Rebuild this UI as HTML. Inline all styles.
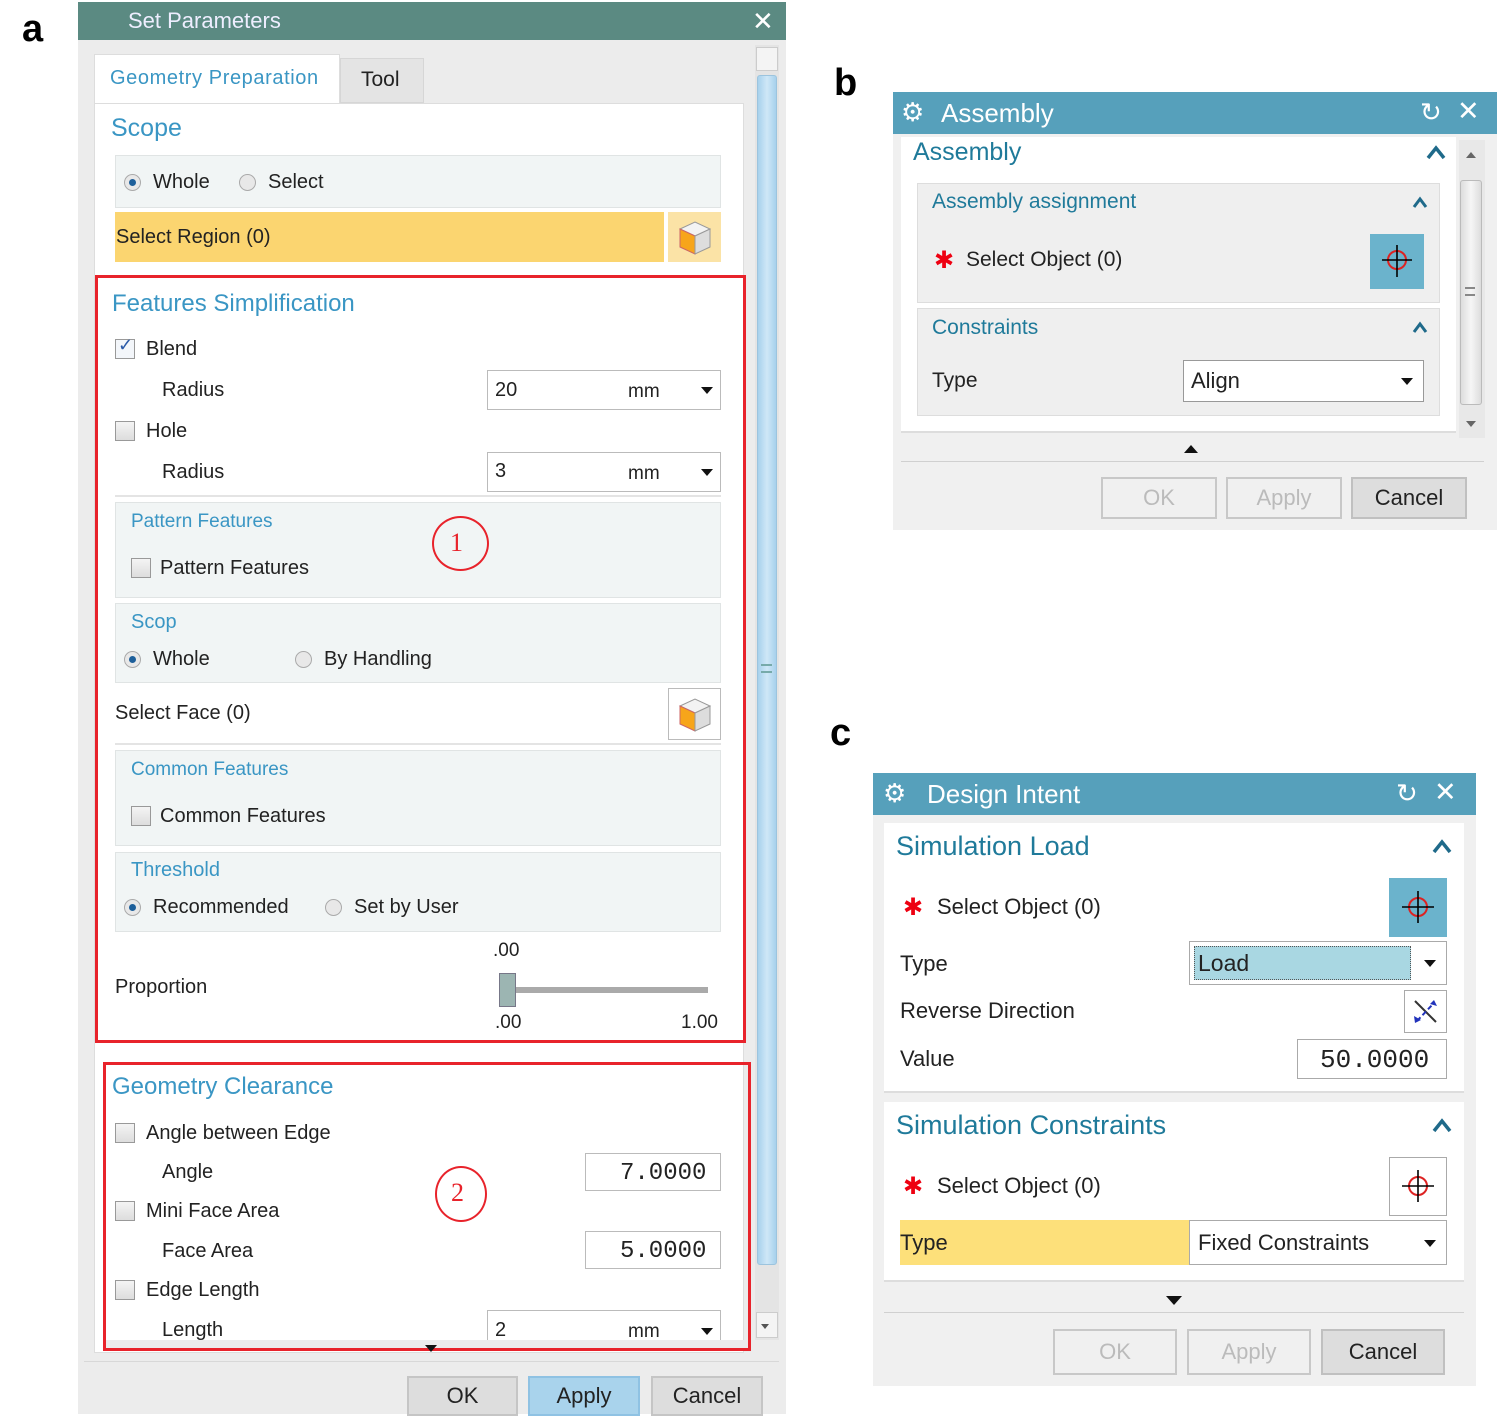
<!DOCTYPE html>
<html><head><meta charset="utf-8"><style>
*{margin:0;padding:0;box-sizing:border-box}
body{width:1500px;height:1416px;background:#fff;position:relative;overflow:hidden;font-family:"Liberation Sans",sans-serif;color:#222}
.a{position:absolute}
.t{position:absolute;line-height:1;white-space:nowrap}
.blue{color:#3a96c4}
.teal{color:#1f7a9a}
.rb{position:absolute;width:17px;height:17px;border-radius:50%;border:1px solid #aaa;background:#e8e8e8}
.rb.on::after{content:"";position:absolute;left:4px;top:4px;width:7px;height:7px;border-radius:50%;background:#1d5f9a}
.cb{position:absolute;width:20px;height:20px;border:1px solid #999;background:linear-gradient(#f4f4f4,#ddd)}
.box{position:absolute;background:#fff;border:1px solid #bbb}
.grp{position:absolute;background:#f1f5f5;border:1px solid #e0e4e4}
.btn{position:absolute;border:2px solid #c8c8c8;background:#eee;text-align:center;font-size:22px}
.dd{position:absolute;width:0;height:0;border-left:6px solid transparent;border-right:6px solid transparent;border-top:7px solid #111}
</style></head><body>

<!-- labels -->
<div class="t" style="left:22px;top:10px;font-size:38px;font-weight:bold;color:#000">a</div>
<div class="t" style="left:834px;top:64px;font-size:38px;font-weight:bold;color:#000">b</div>
<div class="t" style="left:830px;top:714px;font-size:38px;font-weight:bold;color:#000">c</div>

<!-- PANEL A -->
<div class="a" style="left:78px;top:2px;width:708px;height:1412px;background:#ececec"></div>
<div class="a" style="left:78px;top:2px;width:708px;height:38px;background:#5b8a82"></div>
<div class="t" style="left:128px;top:10px;font-size:22px;color:#eef">Set Parameters</div>
<div class="t" style="left:752px;top:8px;font-size:26px;color:#fff">✕</div>
<!-- tabs -->
<div class="a" style="left:94px;top:54px;width:246px;height:52px;background:#fff;border:1px solid #ddd;border-bottom:none"></div>
<div class="a" style="left:340px;top:58px;width:84px;height:45px;background:#e4e4e4;border:1px solid #d6d6d6"></div>
<div class="t blue" style="left:110px;top:68px;font-size:20px;letter-spacing:0.6px">Geometry Preparation</div>
<div class="t" style="left:361px;top:69px;font-size:21px">Tool</div>
<div class="a" style="left:94px;top:103px;width:650px;height:1250px;background:#fff;border:1px solid #ddd"></div>
<!-- scrollbar -->
<div class="a" style="left:755px;top:45px;width:24px;height:1295px;background:#e4e4e4"></div>
<div class="a" style="left:756px;top:47px;width:22px;height:24px;background:#f4f4f4;border:1px solid #ccc"></div>
<div class="a" style="left:757px;top:75px;width:20px;height:1190px;background:linear-gradient(90deg,#a7d1ec,#cfe7f7,#a7d1ec);border:1px solid #9cc4de;border-radius:3px"></div>
<div class="a" style="left:761px;top:664px;width:11px;height:9px;border-top:2px solid #7aa;border-bottom:2px solid #7aa"></div>
<div class="a" style="left:756px;top:1312px;width:22px;height:26px;background:#f4f4f4;border:1px solid #ccc"></div>
<div class="dd" style="left:761px;top:1324px;border-left-width:4px;border-right-width:4px;border-top-width:5px;border-top-color:#555"></div>

<div class="t blue" style="left:111px;top:116px;font-size:25px">Scope</div>
<div class="grp" style="left:115px;top:155px;width:606px;height:53px"></div>
<div class="rb on" style="left:124px;top:174px"></div>
<div class="t" style="left:153px;top:172px;font-size:20px">Whole</div>
<div class="rb" style="left:239px;top:174px"></div>
<div class="t" style="left:268px;top:172px;font-size:20px">Select</div>
<div class="a" style="left:115px;top:212px;width:549px;height:50px;background:#fbd570"></div>
<div class="t" style="left:116px;top:227px;font-size:20px">Select Region (0)</div>
<div class="a" style="left:668px;top:212px;width:53px;height:50px;background:#fbe3a6"></div>
<svg class="a" style="left:677px;top:219px" width="36" height="38" viewBox="0 0 36 38"><path d="M3 10 L18 3 L33 10 L18 17Z" fill="#f3f3f3" stroke="#999"/><path d="M3 10 L18 17 L18 35 L3 28Z" fill="#f7a51a" stroke="#c66"/><path d="M18 17 L33 10 L33 28 L18 35Z" fill="#ddd" stroke="#999"/></svg>

<!-- red box 1 -->
<div class="a" style="left:95px;top:275px;width:651px;height:768px;border:3px solid #e8232b"></div>
<div class="t blue" style="left:112px;top:292px;font-size:24px">Features Simplification</div>
<div class="cb" style="left:115px;top:339px;background:#f3f6fa"></div>
<div class="t" style="left:118px;top:336px;font-size:18px;color:#2a5aa8">✓</div>
<div class="t" style="left:146px;top:339px;font-size:20px">Blend</div>
<div class="t" style="left:162px;top:380px;font-size:20px">Radius</div>
<div class="box" style="left:487px;top:370px;width:234px;height:40px"></div>
<div class="t" style="left:495px;top:380px;font-size:20px">20</div>
<div class="t" style="left:628px;top:382px;font-size:19px">mm</div>
<div class="dd" style="left:701px;top:387px"></div>
<div class="cb" style="left:115px;top:421px"></div>
<div class="t" style="left:146px;top:421px;font-size:20px">Hole</div>
<div class="t" style="left:162px;top:462px;font-size:20px">Radius</div>
<div class="box" style="left:487px;top:452px;width:234px;height:40px"></div>
<div class="t" style="left:495px;top:461px;font-size:20px">3</div>
<div class="t" style="left:628px;top:464px;font-size:19px">mm</div>
<div class="dd" style="left:701px;top:469px"></div>
<div class="a" style="left:115px;top:495px;width:606px;height:2px;background:#e4e4e4"></div>
<div class="grp" style="left:115px;top:502px;width:606px;height:96px"></div>
<div class="t blue" style="left:131px;top:512px;font-size:19px">Pattern Features</div>
<div class="cb" style="left:131px;top:558px"></div>
<div class="t" style="left:160px;top:558px;font-size:20px">Pattern Features</div>
<div class="a" style="left:432px;top:516px;width:57px;height:55px;border:2px solid #e8232b;border-radius:50%"></div>
<div class="t" style="left:450px;top:530px;font-size:26px;color:#e8232b;font-family:'Liberation Serif',serif">1</div>
<div class="grp" style="left:115px;top:603px;width:606px;height:80px"></div>
<div class="t blue" style="left:131px;top:612px;font-size:20px">Scop</div>
<div class="rb on" style="left:124px;top:651px"></div>
<div class="t" style="left:153px;top:649px;font-size:20px">Whole</div>
<div class="rb" style="left:295px;top:651px"></div>
<div class="t" style="left:324px;top:649px;font-size:20px">By Handling</div>
<div class="t" style="left:115px;top:703px;font-size:20px">Select Face (0)</div>
<div class="box" style="left:668px;top:688px;width:53px;height:52px"></div>
<svg class="a" style="left:677px;top:696px" width="36" height="38" viewBox="0 0 36 38"><path d="M3 10 L18 3 L33 10 L18 17Z" fill="#f3f3f3" stroke="#999"/><path d="M3 10 L18 17 L18 35 L3 28Z" fill="#f7a51a" stroke="#c66"/><path d="M18 17 L33 10 L33 28 L18 35Z" fill="#ddd" stroke="#999"/></svg>
<div class="a" style="left:115px;top:743px;width:606px;height:2px;background:#e4e4e4"></div>
<div class="grp" style="left:115px;top:750px;width:606px;height:96px"></div>
<div class="t blue" style="left:131px;top:760px;font-size:19px">Common Features</div>
<div class="cb" style="left:131px;top:806px"></div>
<div class="t" style="left:160px;top:806px;font-size:20px">Common Features</div>
<div class="grp" style="left:115px;top:852px;width:606px;height:80px"></div>
<div class="t blue" style="left:131px;top:860px;font-size:20px">Threshold</div>
<div class="rb on" style="left:124px;top:899px"></div>
<div class="t" style="left:153px;top:897px;font-size:20px">Recommended</div>
<div class="rb" style="left:325px;top:899px"></div>
<div class="t" style="left:354px;top:897px;font-size:20px">Set by User</div>
<div class="t" style="left:493px;top:941px;font-size:19px">.00</div>
<div class="t" style="left:115px;top:977px;font-size:20px">Proportion</div>
<div class="a" style="left:510px;top:987px;width:198px;height:6px;background:#aaa"></div>
<div class="a" style="left:499px;top:973px;width:17px;height:34px;background:#9cb5b2;border:1px solid #778"></div>
<div class="t" style="left:495px;top:1013px;font-size:19px">.00</div>
<div class="t" style="left:681px;top:1013px;font-size:19px">1.00</div>

<!-- red box 2 -->
<div class="a" style="left:103px;top:1062px;width:648px;height:289px;border:3px solid #e8232b"></div>
<div class="t blue" style="left:112px;top:1075px;font-size:24px">Geometry Clearance</div>
<div class="cb" style="left:115px;top:1123px"></div>
<div class="t" style="left:146px;top:1123px;font-size:20px">Angle between Edge</div>
<div class="t" style="left:162px;top:1162px;font-size:20px">Angle</div>
<div class="box" style="left:585px;top:1153px;width:136px;height:38px"></div>
<div class="t" style="left:620px;top:1162px;font-size:24px;font-family:'Liberation Mono',monospace">7.0000</div>
<div class="cb" style="left:115px;top:1201px"></div>
<div class="t" style="left:146px;top:1201px;font-size:20px">Mini Face Area</div>
<div class="a" style="left:435px;top:1166px;width:52px;height:56px;border:2px solid #e8232b;border-radius:50%"></div>
<div class="t" style="left:451px;top:1180px;font-size:26px;color:#e8232b;font-family:'Liberation Serif',serif">2</div>
<div class="t" style="left:162px;top:1241px;font-size:20px">Face Area</div>
<div class="box" style="left:585px;top:1231px;width:136px;height:38px"></div>
<div class="t" style="left:620px;top:1240px;font-size:24px;font-family:'Liberation Mono',monospace">5.0000</div>
<div class="cb" style="left:115px;top:1280px"></div>
<div class="t" style="left:146px;top:1280px;font-size:20px">Edge Length</div>
<div class="t" style="left:162px;top:1320px;font-size:20px">Length</div>
<div class="box" style="left:487px;top:1310px;width:234px;height:30px;border-bottom:none"></div>
<div class="t" style="left:495px;top:1320px;font-size:20px">2</div>
<div class="t" style="left:628px;top:1322px;font-size:19px">mm</div>
<div class="dd" style="left:701px;top:1328px"></div>
<div class="a" style="left:106px;top:1340px;width:640px;height:8px;background:#ececec"></div>
<div class="dd" style="left:425px;top:1345px"></div>
<div class="a" style="left:84px;top:1361px;width:695px;height:1px;background:#d8d8d8"></div>
<div class="btn" style="left:407px;top:1376px;width:111px;height:40px;background:#ddd;border-color:#c5c5c5;line-height:36px">OK</div>
<div class="btn" style="left:528px;top:1376px;width:112px;height:40px;background:#a9d3ec;border-color:#8fc2e3;line-height:36px">Apply</div>
<div class="btn" style="left:651px;top:1376px;width:112px;height:40px;background:#ddd;border-color:#c5c5c5;line-height:36px">Cancel</div>

<!-- PANEL B -->
<div class="a" style="left:893px;top:92px;width:604px;height:438px;background:#f0f0f0"></div>
<div class="a" style="left:893px;top:92px;width:604px;height:42px;background:#56a0bb"></div>
<div class="t" style="left:901px;top:99px;font-size:26px;color:#fff">⚙</div>
<div class="t" style="left:941px;top:100px;font-size:26px;color:#fff">Assembly</div>
<div class="t" style="left:1420px;top:99px;font-size:26px;color:#fff">↻</div>
<div class="t" style="left:1457px;top:98px;font-size:27px;color:#fff">✕</div>
<div class="a" style="left:901px;top:137px;width:555px;height:296px;background:#fff;border-bottom:2px solid #ddd"></div>
<div class="t teal" style="left:913px;top:140px;font-size:25px">Assembly</div>
<svg class="a" style="left:1426px;top:144px" width="20" height="16" viewBox="0 0 20 16"><path d="M2 14L10 4L18 14" fill="none" stroke="#1f6a8a" stroke-width="3.5"/></svg>
<div class="a" style="left:917px;top:183px;width:523px;height:120px;background:#efefef;border:1px solid #ddd"></div>
<div class="t teal" style="left:932px;top:191px;font-size:21px">Assembly assignment</div>
<svg class="a" style="left:1412px;top:196px" width="16" height="13" viewBox="0 0 16 13"><path d="M2 11L8 3L14 11" fill="none" stroke="#1f6a8a" stroke-width="3"/></svg>
<div class="t" style="left:934px;top:249px;font-size:24px;color:#e01">✱</div>
<div class="t" style="left:966px;top:249px;font-size:21px">Select Object (0)</div>
<div class="a" style="left:1370px;top:234px;width:54px;height:55px;background:#6bb3cc"></div>
<svg class="a" style="left:1380px;top:243px" width="34" height="36" viewBox="0 0 34 36"><circle cx="17" cy="17" r="9" fill="none" stroke="#d22" stroke-width="2"/><path d="M17 2V34M2 17H32" stroke="#000" stroke-width="1.6"/></svg>
<div class="a" style="left:917px;top:308px;width:523px;height:108px;background:#efefef;border:1px solid #ddd"></div>
<div class="t teal" style="left:932px;top:317px;font-size:21px">Constraints</div>
<svg class="a" style="left:1412px;top:321px" width="16" height="13" viewBox="0 0 16 13"><path d="M2 11L8 3L14 11" fill="none" stroke="#1f6a8a" stroke-width="3"/></svg>
<div class="t" style="left:932px;top:370px;font-size:21px">Type</div>
<div class="box" style="left:1183px;top:360px;width:241px;height:42px;border-color:#999"></div>
<div class="t" style="left:1191px;top:370px;font-size:22px">Align</div>
<div class="dd" style="left:1401px;top:378px"></div>
<div class="a" style="left:1459px;top:140px;width:26px;height:298px;background:#e8e8e8"></div>
<div class="dd" style="left:1466px;top:152px;border-top:none;border-bottom:6px solid #666;border-left-width:5px;border-right-width:5px"></div>
<div class="a" style="left:1460px;top:180px;width:22px;height:225px;background:linear-gradient(90deg,#ddd,#f6f6f6,#ddd);border:1px solid #bbb;border-radius:3px"></div>
<div class="a" style="left:1465px;top:287px;width:10px;height:9px;border-top:2px solid #888;border-bottom:2px solid #888"></div>
<div class="dd" style="left:1466px;top:421px;border-top-width:6px;border-top-color:#666;border-left-width:5px;border-right-width:5px"></div>
<div class="a" style="left:1184px;top:445px;border-left:7px solid transparent;border-right:7px solid transparent;border-bottom:8px solid #111"></div>
<div class="a" style="left:901px;top:461px;width:583px;height:1px;background:#d0d0d0"></div>
<div class="btn" style="left:1101px;top:477px;width:116px;height:42px;line-height:38px;color:#bbb;background:#f0f0f0">OK</div>
<div class="btn" style="left:1226px;top:477px;width:116px;height:42px;line-height:38px;color:#bbb;background:#f0f0f0">Apply</div>
<div class="btn" style="left:1351px;top:477px;width:116px;height:42px;line-height:38px;background:#ddd;border-color:#c0c0c0">Cancel</div>

<!-- PANEL C -->
<div class="a" style="left:873px;top:773px;width:603px;height:613px;background:#f0f0f0"></div>
<div class="a" style="left:873px;top:773px;width:603px;height:42px;background:#56a0bb"></div>
<div class="t" style="left:883px;top:780px;font-size:26px;color:#fff">⚙</div>
<div class="t" style="left:927px;top:781px;font-size:26px;color:#fff">Design Intent</div>
<div class="t" style="left:1396px;top:780px;font-size:26px;color:#fff">↻</div>
<div class="t" style="left:1434px;top:779px;font-size:27px;color:#fff">✕</div>
<div class="a" style="left:884px;top:823px;width:580px;height:270px;background:#fff;border-bottom:2px solid #ddd"></div>
<div class="t teal" style="left:896px;top:833px;font-size:27px">Simulation Load</div>
<svg class="a" style="left:1432px;top:838px" width="20" height="16" viewBox="0 0 20 16"><path d="M2 14L10 4L18 14" fill="none" stroke="#1f6a8a" stroke-width="3.5"/></svg>
<div class="t" style="left:903px;top:896px;font-size:24px;color:#e01">✱</div>
<div class="t" style="left:937px;top:896px;font-size:22px">Select Object (0)</div>
<div class="a" style="left:1389px;top:878px;width:58px;height:59px;background:#6bb3cc"></div>
<svg class="a" style="left:1400px;top:889px" width="36" height="36" viewBox="0 0 36 36"><circle cx="18" cy="18" r="9" fill="none" stroke="#d22" stroke-width="2"/><path d="M18 2V34M2 18H34" stroke="#000" stroke-width="1.6"/></svg>
<div class="t" style="left:900px;top:953px;font-size:22px">Type</div>
<div class="box" style="left:1189px;top:941px;width:258px;height:44px;border-color:#aaa"></div>
<div class="a" style="left:1194px;top:946px;width:217px;height:34px;background:#a9d7e2;border:1px dotted #555"></div>
<div class="t" style="left:1198px;top:952px;font-size:23px">Load</div>
<div class="dd" style="left:1424px;top:960px"></div>
<div class="t" style="left:900px;top:1000px;font-size:22px">Reverse Direction</div>
<div class="box" style="left:1404px;top:990px;width:43px;height:43px;border-color:#aaa"></div>
<svg class="a" style="left:1409px;top:995px" width="33" height="33" viewBox="0 0 33 33"><path d="M6 6L27 27" stroke="#333" stroke-width="2"/><path d="M8 26L25 8" stroke="#2233bb" stroke-width="2" stroke-dasharray="5 3"/><path d="M25 5L28 11L21 9Z" fill="#2233bb"/><path d="M6 28L5 21L12 25Z" fill="#2233bb"/></svg>
<div class="t" style="left:900px;top:1048px;font-size:22px">Value</div>
<div class="box" style="left:1297px;top:1039px;width:150px;height:40px;border-color:#aaa"></div>
<div class="t" style="left:1320px;top:1047px;font-size:26px;font-family:'Liberation Mono',monospace">50.0000</div>
<div class="a" style="left:884px;top:1102px;width:580px;height:180px;background:#fff;border-bottom:2px solid #ddd"></div>
<div class="t teal" style="left:896px;top:1112px;font-size:27px">Simulation Constraints</div>
<svg class="a" style="left:1432px;top:1117px" width="20" height="16" viewBox="0 0 20 16"><path d="M2 14L10 4L18 14" fill="none" stroke="#1f6a8a" stroke-width="3.5"/></svg>
<div class="t" style="left:903px;top:1175px;font-size:24px;color:#e01">✱</div>
<div class="t" style="left:937px;top:1175px;font-size:22px">Select Object (0)</div>
<div class="box" style="left:1389px;top:1157px;width:58px;height:59px;border-color:#aaa"></div>
<svg class="a" style="left:1400px;top:1168px" width="36" height="36" viewBox="0 0 36 36"><circle cx="18" cy="18" r="9" fill="none" stroke="#d22" stroke-width="2"/><path d="M18 2V34M2 18H34" stroke="#000" stroke-width="1.6"/></svg>
<div class="a" style="left:900px;top:1220px;width:290px;height:45px;background:#fde07a"></div>
<div class="t" style="left:900px;top:1232px;font-size:22px">Type</div>
<div class="box" style="left:1189px;top:1220px;width:258px;height:45px;border-color:#aaa"></div>
<div class="t" style="left:1198px;top:1232px;font-size:22px">Fixed Constraints</div>
<div class="dd" style="left:1424px;top:1240px"></div>
<div class="a" style="left:1166px;top:1296px;border-left:8px solid transparent;border-right:8px solid transparent;border-top:9px solid #111"></div>
<div class="a" style="left:884px;top:1312px;width:580px;height:1px;background:#d0d0d0"></div>
<div class="btn" style="left:1053px;top:1329px;width:124px;height:46px;line-height:42px;color:#bbb;background:#f0f0f0">OK</div>
<div class="btn" style="left:1187px;top:1329px;width:124px;height:46px;line-height:42px;color:#bbb;background:#f0f0f0">Apply</div>
<div class="btn" style="left:1321px;top:1329px;width:124px;height:46px;line-height:42px;background:#ddd;border-color:#c0c0c0">Cancel</div>
</body></html>
